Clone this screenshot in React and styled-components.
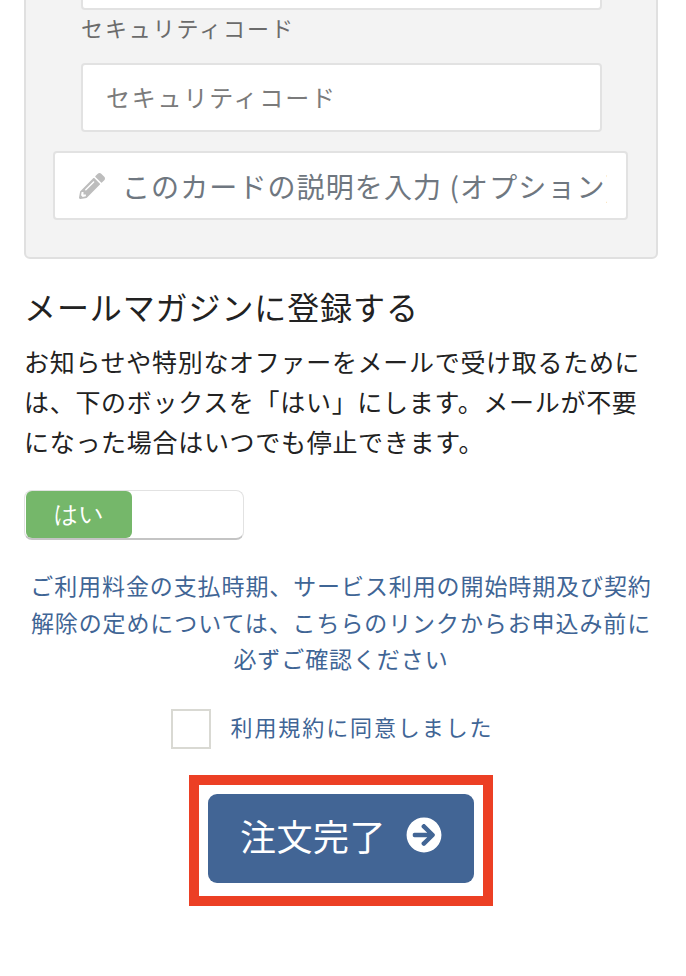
import React, { useState } from "react"
import styled, { createGlobalStyle } from "styled-components"
import { FaPencilAlt, FaArrowCircleRight } from "react-icons/fa"

const GlobalStyle = createGlobalStyle`
  html, body {
    margin: 0;
    padding: 0;
    background: white;
    overflow: hidden;
  }
  body {
    font-family: "Noto Sans CJK JP", "Liberation Sans", sans-serif;
  }
  * {
    box-sizing: border-box;
  }
`

const Page = styled.div`
  width: 686px;
  height: 976px;
  overflow: hidden;
  padding: 0 28px 0 24px;
`
const CardPanel = styled.div`
  margin-top: -40px;
  height: 299px;
  background: #f3f3f3;
  border: 2px solid #e0e0e0;
  border-radius: 6px;
  padding: 0 28px 0 27px;
`
const CardFields = styled.div`
  padding: 0 26px 0 28px;
`
const TextInput = styled.input`
  display: block;
  width: 100%;
  height: ${props => props.$height}px;
  padding: 0 23px 3px;
  background: white;
  border: 2px solid #e2e2e2;
  border-radius: 4px;
  font: inherit;
  font-size: 24px;
  letter-spacing: 1.8px;
  outline: none;
  &::placeholder {
    color: #7b7b7b;
    opacity: 1;
  }
`
const FieldLabel = styled.div`
  margin: 1px 0 20px;
  color: #6b6b6b;
  font-size: 22px;
  line-height: 32px;
  letter-spacing: 1.9px;
`
const DescriptionBox = styled.label`
  display: flex;
  align-items: center;
  gap: 17px;
  height: 69px;
  margin-top: 19px;
  padding: 0 19px 0 24px;
  background: white;
  border: 2px solid #e2e2e2;
  border-radius: 4px;
  overflow: hidden;
  color: #bdbdbd;
  font-size: 26px;
`
const DescriptionInput = styled.input`
  flex: 1;
  min-width: 0;
  border: 0;
  padding: 0;
  background: transparent;
  font: inherit;
  font-size: 28px;
  letter-spacing: 1.1px;
  outline: none;
  &::placeholder {
    color: #6f7780;
    opacity: 1;
  }
`
const Heading = styled.h2`
  margin: 24px 0 0;
  color: #222;
  font-size: 32px;
  font-weight: 400;
  line-height: 46px;
  letter-spacing: 0.9px;
`
const Description = styled.p`
  margin: 12px 0 0;
  color: #222;
  font-size: 25px;
  line-height: 40px;
  letter-spacing: 0.7px;
  white-space: nowrap;
`
const ToggleTrack = styled.button`
  display: block;
  width: 220px;
  height: 50px;
  margin-top: 29px;
  padding: 0;
  background: white;
  border: 1px solid #e2e2e2;
  border-bottom: 2px solid #c4c4c4;
  border-radius: 8px;
  cursor: pointer;
`
const ToggleKnob = styled.span`
  display: flex;
  align-items: center;
  justify-content: center;
  width: 106px;
  height: 47px;
  margin-left: 1px;
  padding-bottom: 2px;
  background: #75b76a;
  border-radius: 6px;
  color: white;
  font-family: inherit;
  font-size: 24px;
`
const NoticeLink = styled.a`
  display: block;
  margin-top: 27px;
  color: #3f6595;
  font-size: 23px;
  line-height: 36.5px;
  letter-spacing: 0.9px;
  text-align: center;
  white-space: nowrap;
  text-decoration: none;
`
const AgreeRow = styled.label`
  display: flex;
  align-items: center;
  justify-content: center;
  gap: 20px;
  margin-top: 32px;
  padding-right: 18px;
  color: #3f6595;
  font-size: 22px;
  line-height: 32px;
  letter-spacing: 1.9px;
`
const AgreeText = styled.span`
  margin-bottom: 5px;
`
const CheckBox = styled.span`
  width: 40px;
  height: 40px;
  background: white;
  border: 2px solid #d9d9d3;
`
const Highlight = styled.div`
  width: 304px;
  margin: 26px auto 0;
  padding: 9px 9px 13px;
  border: 10px solid #ec3f24;
`
const SubmitButton = styled.button`
  display: flex;
  align-items: center;
  justify-content: center;
  gap: 20px;
  width: 100%;
  height: 89px;
  padding: 0 0 6px;
  background: #426595;
  border: 0;
  border-radius: 9px;
  color: white;
  font-family: inherit;
  font-size: 36px;
  letter-spacing: 0.5px;
  cursor: pointer;
`

const App = () => {
  const [subscribed, setSubscribed] = useState(true)

  return (
    <Page>
      <GlobalStyle />
      <CardPanel>
        <CardFields>
          <TextInput $height={48} aria-label="カード番号" />
          <FieldLabel>セキュリティコード</FieldLabel>
          <TextInput $height={69} placeholder="セキュリティコード" />
        </CardFields>
        <DescriptionBox>
          <FaPencilAlt />
          <DescriptionInput placeholder="このカードの説明を入力 (オプション)" />
        </DescriptionBox>
      </CardPanel>

      <Heading>メールマガジンに登録する</Heading>
      <Description>
        お知らせや特別なオファーをメールで受け取るために
        <br />
        は、下のボックスを「はい」にします。メールが不要
        <br />
        になった場合はいつでも停止できます。
      </Description>

      <ToggleTrack onClick={() => setSubscribed(oldState => !oldState)}>
        {subscribed && <ToggleKnob>はい</ToggleKnob>}
      </ToggleTrack>

      <NoticeLink href="#">
        ご利用料金の支払時期、サービス利用の開始時期及び契約
        <br />
        解除の定めについては、こちらのリンクからお申込み前に
        <br />
        必ずご確認ください
      </NoticeLink>

      <AgreeRow>
        <CheckBox />
        <AgreeText>利用規約に同意しました</AgreeText>
      </AgreeRow>

      <Highlight>
        <SubmitButton>
          注文完了
          <FaArrowCircleRight size={36} />
        </SubmitButton>
      </Highlight>
    </Page>
  )
}

export default App
